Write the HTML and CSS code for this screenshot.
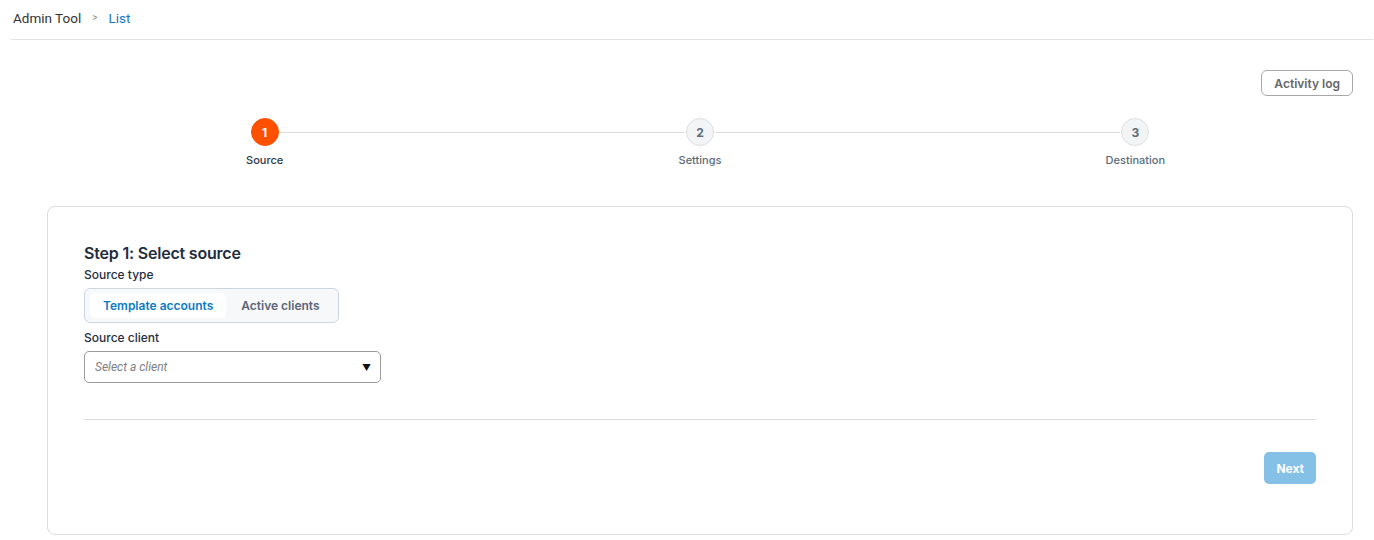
FILE: index.html
```html
<!DOCTYPE html>
<html lang="en">
<head>
    <meta charset="UTF-8">
    <meta name="viewport" content="width=device-width, initial-scale=1.0">
    <title>Admin Tool - List</title>
    <link rel="stylesheet" href="styles.css">
</head>
<body>
    <nav class="breadcrumb">
        <span class="crumb">Admin Tool</span>
        <span class="crumb-sep">&gt;</span>
        <span class="crumb crumb-current">List</span>
    </nav>

    <main class="page">
        <div class="toolbar">
            <button class="btn-outline">Activity log</button>
        </div>

        <ol class="stepper">
            <li class="step active">
                <span class="step-circle">1</span>
                <span class="step-label">Source</span>
            </li>
            <li class="step">
                <span class="step-circle">2</span>
                <span class="step-label">Settings</span>
            </li>
            <li class="step">
                <span class="step-circle">3</span>
                <span class="step-label">Destination</span>
            </li>
        </ol>

        <section class="card">
            <h2 class="card-title">Step 1: Select source</h2>

            <label class="field-label">Source type</label>
            <div class="segmented">
                <button class="segment selected">Template accounts</button>
                <button class="segment">Active clients</button>
            </div>

            <label class="field-label">Source client</label>
            <div class="select">
                <span class="select-placeholder">Select a client</span>
                <span class="select-arrow">&#9660;</span>
            </div>

            <hr class="card-divider">

            <div class="card-actions">
                <button class="btn-primary" disabled>Next</button>
            </div>
        </section>
    </main>
</body>
</html>
```

FILE: styles.css
```css
body {
    font-family: Inter, "Liberation Sans", sans-serif;
    background-color: #fff;
    color: #1f2d3d;
    margin: 0;
    padding: 0;
}

button {
    font-family: inherit;
}

/* breadcrumb bar */
.breadcrumb {
    display: flex;
    align-items: center;
    gap: 11px;
    height: 35px;
    margin: 0 1px 0 11px;
    padding: 0 2px 4px;
    border-bottom: 1px solid #e3e3e3;
    font-family: Roboto, sans-serif;
    font-size: 13.5px;
    color: #333;
}

.crumb-sep {
    font-size: 10px;
    color: #888;
}

.crumb-current {
    color: #1877c0;
}

.page {
    padding: 30px 21px 0 47px;
}

.toolbar {
    display: flex;
    justify-content: flex-end;
}

.btn-outline {
    height: 26px;
    padding: 0 12px;
    background: #fff;
    border: 1px solid #a8a8a8;
    border-radius: 6px;
    font-size: 12px;
    font-weight: 600;
    color: #666;
}

/* stepper */
.stepper {
    display: grid;
    grid-template-columns: repeat(3, 1fr);
    list-style: none;
    margin: 22px 0 0;
    padding: 0;
    width: 1306px;
}

.step {
    position: relative;
    display: flex;
    flex-direction: column;
    align-items: center;
    gap: 7px;
}

/* connector line drawn to the next step */
.step:not(:last-child)::after {
    content: "";
    position: absolute;
    top: 14px;
    left: calc(50% + 15px);
    width: calc(100% - 30px);
    height: 1px;
    background: #dcdcdc;
}

.step-circle {
    display: flex;
    align-items: center;
    justify-content: center;
    width: 28px;
    height: 28px;
    box-sizing: border-box;
    border-radius: 50%;
    border: 1px solid #dedede;
    background: #f3f4f6;
    font-size: 12px;
    font-weight: 700;
    color: #5b6b7b;
}

.step-label {
    font-size: 11px;
    font-weight: 500;
    color: #5b6b7b;
}

.step.active .step-circle {
    background: #ff5000;
    border-color: #ff5000;
    color: #fff;
}

.step.active .step-label {
    color: #2d3748;
}

/* card */
.card {
    width: 1306px;
    box-sizing: border-box;
    margin-top: 39px;
    padding: 36px 36px 50px;
    border: 1px solid #dcdcdc;
    border-radius: 8px;
}

.card-title {
    margin: 0 0 4px;
    font-size: 16px;
    font-weight: 600;
    letter-spacing: -0.2px;
    color: #1f2d3d;
}

.field-label {
    display: block;
    margin-bottom: 6px;
    font-size: 12px;
    font-weight: 500;
    color: #1f2d3d;
}

.segmented {
    display: inline-flex;
    gap: 2px;
    padding: 4px 5px;
    margin-bottom: 7px;
    background: #f7f8fa;
    border: 1px solid #cdd5e0;
    border-radius: 6px;
}

.segment {
    height: 25px;
    padding: 0 13px;
    border: none;
    border-radius: 5px;
    background: transparent;
    font-size: 12px;
    font-weight: 600;
    color: #5a6478;
}

.segment.selected {
    background: #fff;
    color: #0a7ac4;
}

.select {
    display: flex;
    align-items: center;
    justify-content: space-between;
    width: 297px;
    height: 32px;
    box-sizing: border-box;
    padding: 0 9px 0 10px;
    border: 1px solid #9a9a9a;
    border-radius: 5px;
}

.select-placeholder {
    font-family: Roboto, sans-serif;
    font-size: 12px;
    font-style: italic;
    color: #808080;
}

.select-arrow {
    font-size: 9px;
    color: #111;
}

.card-divider {
    margin: 36px 0 0;
    border: none;
    border-top: 1px solid #dcdcdc;
}

.card-actions {
    display: flex;
    justify-content: flex-end;
    margin-top: 32px;
}

.btn-primary {
    height: 32px;
    padding: 0 12px;
    border: none;
    border-radius: 5px;
    background: #85c1e6;
    font-size: 12px;
    font-weight: 700;
    color: #fff;
}
```
